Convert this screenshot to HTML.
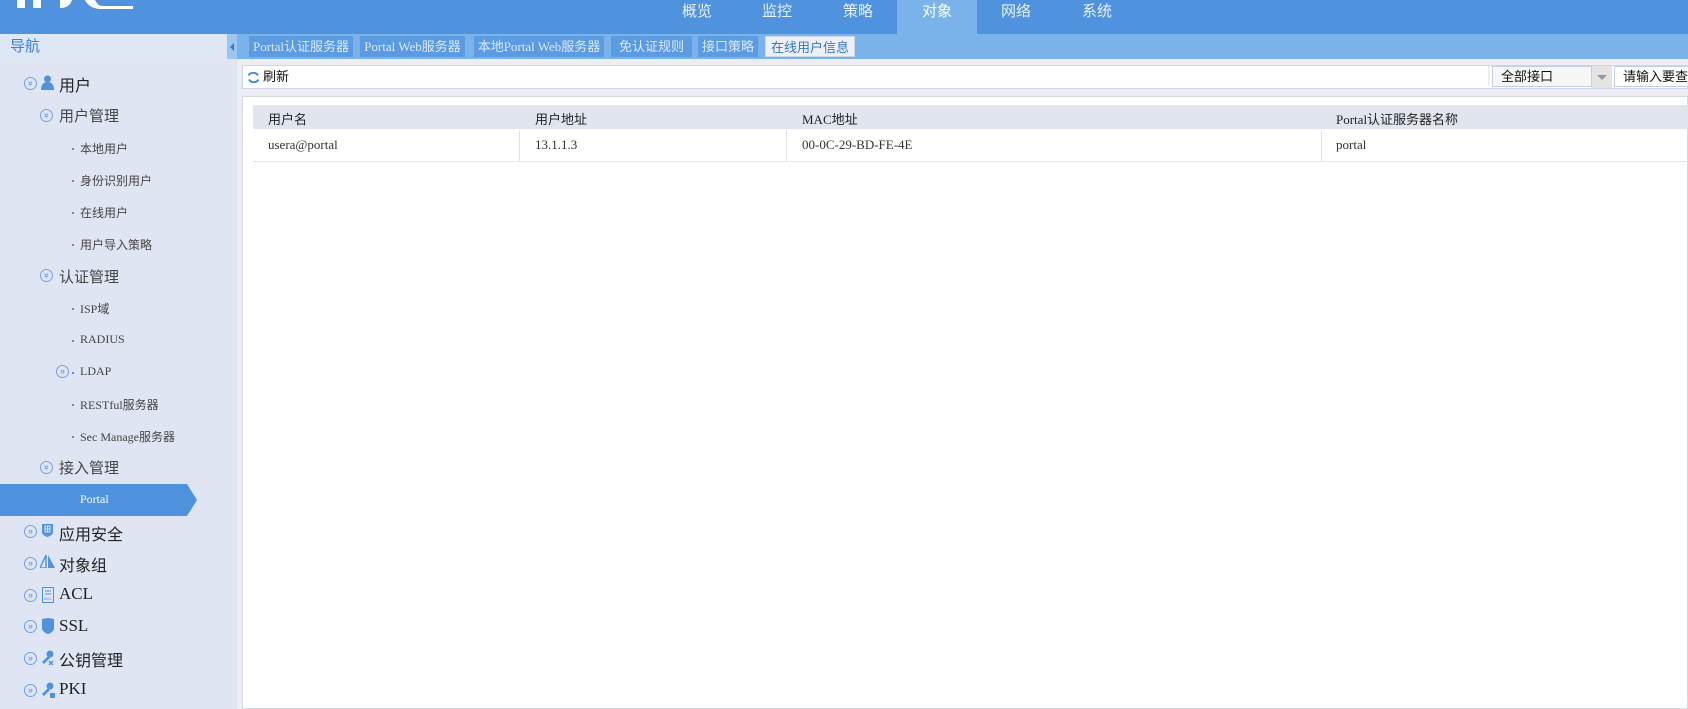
<!DOCTYPE html>
<html><head><meta charset="utf-8"><style>
*{margin:0;padding:0;box-sizing:border-box}
body{width:1688px;height:709px;overflow:hidden;background:#fff;font-family:"Liberation Serif","Noto Sans CJK SC",serif;position:relative}
.a{position:absolute}
.hd{left:0;top:0;width:1688px;height:34px;background:#4f93df}
.nav{top:0;height:34px;width:80px;color:#e8f1fb;font:15px "Liberation Sans","Noto Sans CJK SC",sans-serif;text-align:center;line-height:24px}
.sb{left:0;top:34px;width:237px;height:675px;background:#dfe5f2}
.it{white-space:nowrap;color:#333;font-family:"Liberation Serif","Noto Sans CJK SC",serif}
.l1{font-size:16px;left:59px;color:#222}
.l2{font-size:15px;left:59px;color:#444;font-family:"Liberation Sans","Noto Sans CJK SC",sans-serif}
.l3{font-size:12px;left:80px;color:#444}
.dot{width:2px;height:2px;background:#4f93df;left:72px}
.cir{width:13px;height:13px;border:1.5px solid #6fa3e3;border-radius:50%;color:#6fa3e3;font:bold 9px/10px sans-serif;text-align:center}
.dn{transform:rotate(90deg)}
.tab{top:36px;height:21px;background:#5b9be2;color:#dce9f8;font-size:13px;line-height:21px;text-align:center;white-space:nowrap}
</style></head><body>
<div class="a hd"></div>
<svg class="a" style="left:0;top:0" width="160" height="10"><g fill="#fff"><rect x="17" y="0" width="8" height="8"/><rect x="33" y="0" width="8" height="8"/><path d="M60 0h12c-2 6-6 8-12 8z"/><path d="M85 0h10c2 4 4 6 8 6h30v3h-32c-8 0-14-4-16-9z"/></g></svg>
<div class="a" style="left:897px;top:0;width:80px;height:34px;background:#7ab3ea"></div>
<div class="a nav" style="left:657px">概览</div>
<div class="a nav" style="left:737px">监控</div>
<div class="a nav" style="left:818px">策略</div>
<div class="a nav" style="left:897px;color:#fff">对象</div>
<div class="a nav" style="left:976px">网络</div>
<div class="a nav" style="left:1057px">系统</div>

<div class="a sb"></div>
<div class="a" style="left:0;top:34px;width:237px;height:25px;background:#dde7f6;color:#3b82d6;font:15px 'Liberation Sans','Noto Sans CJK SC',sans-serif;line-height:25px;padding-left:10px">导航</div>
<div class="a" style="left:227px;top:34px;width:10px;height:25px;background:#9cc6ef"></div>
<div class="a" style="left:230px;top:43px;width:0;height:0;border-top:4px solid transparent;border-bottom:4px solid transparent;border-right:4px solid #2f78d0"></div>
<div class="a" style="left:237px;top:34px;width:1451px;height:25px;background:#7ab3ea"></div>
<div class="a" style="left:237px;top:59px;width:1451px;height:650px;background:#eceef4"></div>

<div class="a tab" style="left:249px;width:104px">Portal认证服务器</div>
<div class="a tab" style="left:360px;width:105px">Portal Web服务器</div>
<div class="a tab" style="left:474px;width:130px">本地Portal Web服务器</div>
<div class="a tab" style="left:611px;width:81px">免认证规则</div>
<div class="a tab" style="left:698px;width:60px">接口策略</div>
<div class="a tab" style="left:765px;width:90px;background:#eef0f6;color:#2f78d0;border:1px solid #c9d6ea">在线用户信息</div>

<div class="a" style="left:242px;top:65px;width:1446px;height:24px;background:#fff;border:1px solid #cfd5e6"></div>
<svg class="a" style="left:247px;top:71px" width="13" height="13"><path d="M11 4.5A5.5 5.5 0 0 0 1.5 4.5M2 8.5A5.5 5.5 0 0 0 11.5 8.5" fill="none" stroke="#3b86dc" stroke-width="1.8"/></svg>
<div class="a it" style="left:263px;top:67px;font:13px 'Liberation Sans','Noto Sans CJK SC',sans-serif;line-height:20px;color:#111">刷新</div>
<div class="a" style="left:1488px;top:66px;width:2px;height:20px;background:#eee"></div>
<div class="a" style="left:1492px;top:66px;width:100px;height:21px;border:1px solid #c3cde3;background:#f7f7f7;font:13px 'Liberation Sans','Noto Sans CJK SC',sans-serif;line-height:19px;padding-left:8px;color:#111">全部接口</div>
<div class="a" style="left:1592px;top:66px;width:20px;height:22px;background:#e4e4e4"></div>
<div class="a" style="left:1597px;top:75px;border-left:5px solid transparent;border-right:5px solid transparent;border-top:5px solid #999"></div>
<div class="a" style="left:1614px;top:66px;width:80px;height:21px;border:1px solid #c3cde3;background:#fff;font:13px 'Liberation Sans','Noto Sans CJK SC',sans-serif;line-height:19px;padding-left:8px;color:#111;white-space:nowrap">请输入要查询</div>

<div class="a" style="left:242px;top:96px;width:1446px;height:613px;background:#fff;border:1px solid #d5d9e6"></div>
<div class="a" style="left:253px;top:105px;width:1435px;height:24px;background:#e1e6ee"></div>
<div class="a" style="left:253px;top:161px;width:1435px;height:1px;background:#e6e6e6"></div>
<div class="a" style="left:519px;top:130px;width:1px;height:31px;background:#e2e2e2"></div>
<div class="a" style="left:786px;top:130px;width:1px;height:31px;background:#e2e2e2"></div>
<div class="a" style="left:1321px;top:130px;width:1px;height:31px;background:#e2e2e2"></div>
<div class="a it" style="left:268px;top:109px;font-size:13px;color:#222">用户名</div>
<div class="a it" style="left:535px;top:109px;font-size:13px;color:#222">用户地址</div>
<div class="a it" style="left:802px;top:109px;font-size:13px;color:#222">MAC地址</div>
<div class="a it" style="left:1336px;top:109px;font-size:13px;color:#222">Portal认证服务器名称</div>
<div class="a it" style="left:268px;top:137px;font-size:13px">usera@portal</div>
<div class="a it" style="left:535px;top:137px;font-size:13px">13.1.1.3</div>
<div class="a it" style="left:802px;top:137px;font-size:13px">00-0C-29-BD-FE-4E</div>
<div class="a it" style="left:1336px;top:137px;font-size:13px">portal</div>

<div class="a" style="left:0;top:484px;width:187px;height:32px;background:#4f93df"></div>
<div class="a" style="left:187px;top:484px;width:0;height:0;border-top:16px solid transparent;border-bottom:16px solid transparent;border-left:10px solid #4f93df"></div>

<div class="a cir dn" style="left:24px;top:77px">»</div>
<svg class="a" style="left:41px;top:75px" width="13" height="15"><circle cx="6.5" cy="4" r="3.5" fill="#4f93df"/><path d="M0 15c0-6 3-8 6.5-8s6.5 2 6.5 8z" fill="#4f93df"/></svg>
<div class="a it l1" style="top:72px">用户</div>
<div class="a cir dn" style="left:40px;top:109px">»</div>
<div class="a it l2" style="top:105px">用户管理</div>
<div class="a dot" style="top:148px"></div><div class="a it l3" style="top:140px">本地用户</div>
<div class="a dot" style="top:180px"></div><div class="a it l3" style="top:172px">身份识别用户</div>
<div class="a dot" style="top:212px"></div><div class="a it l3" style="top:204px">在线用户</div>
<div class="a dot" style="top:244px"></div><div class="a it l3" style="top:236px">用户导入策略</div>
<div class="a cir dn" style="left:40px;top:269px">»</div>
<div class="a it l2" style="top:266px">认证管理</div>
<div class="a dot" style="top:308px"></div><div class="a it l3" style="top:300px">ISP域</div>
<div class="a dot" style="top:340px"></div><div class="a it l3" style="top:332px">RADIUS</div>
<div class="a cir" style="left:56px;top:365px">»</div>
<div class="a dot" style="top:372px"></div><div class="a it l3" style="top:364px">LDAP</div>
<div class="a dot" style="top:404px"></div><div class="a it l3" style="top:396px">RESTful服务器</div>
<div class="a dot" style="top:436px"></div><div class="a it l3" style="top:428px">Sec Manage服务器</div>
<div class="a cir dn" style="left:40px;top:461px">»</div>
<div class="a it l2" style="top:457px">接入管理</div>
<div class="a dot" style="top:500px"></div><div class="a it l3" style="top:492px;color:#fff">Portal</div>

<div class="a cir" style="left:24px;top:525px">»</div>
<svg class="a" style="left:42px;top:523px" width="11" height="14"><path d="M0 1h11v8c0 3-3 4-5.5 5C3 13 0 12 0 9z" fill="#4f93df"/><rect x="3" y="3" width="5" height="6" fill="none" stroke="#dfe5f2"/><path d="M5.5 3v6M3 6h5" stroke="#dfe5f2"/></svg>
<div class="a it l1" style="top:521px">应用安全</div>
<div class="a cir" style="left:24px;top:557px">»</div>
<svg class="a" style="left:40px;top:555px" width="16" height="13"><path d="M6 0v13H0z" fill="none" stroke="#4f93df" stroke-width="1.4"/><path d="M8 0l7 13H8z" fill="#4f93df"/></svg>
<div class="a it l1" style="top:552px">对象组</div>
<div class="a cir" style="left:24px;top:589px">»</div>
<svg class="a" style="left:42px;top:587px" width="12" height="16"><rect x=".5" y=".5" width="11" height="15" fill="#dfe5f2" stroke="#4f93df"/><path d="M3 4h6M3 7h6" stroke="#4f93df"/><text x="2" y="13" font-size="4" fill="#4f93df" font-family="Liberation Sans">ACL</text></svg>
<div class="a it l1" style="top:584px;font-size:17px">ACL</div>
<div class="a cir" style="left:24px;top:620px">»</div>
<svg class="a" style="left:42px;top:618px" width="12" height="16"><path d="M0 1l6-1 6 1v9c0 3-3 5-6 6-3-1-6-3-6-6z" fill="#4f93df"/></svg>
<div class="a it l1" style="top:616px;font-size:17px">SSL</div>
<div class="a cir" style="left:24px;top:652px">»</div>
<svg class="a" style="left:41px;top:650px" width="14" height="16"><circle cx="9" cy="4" r="3.5" fill="#4f93df"/><path d="M7 6L1 12l2 2 6-6" fill="#4f93df"/><path d="M8 11l4 4M12 11l-4 4" stroke="#4f93df" stroke-width="1.5"/></svg>
<div class="a it l1" style="top:647px">公钥管理</div>
<div class="a cir" style="left:24px;top:684px">»</div>
<svg class="a" style="left:41px;top:682px" width="14" height="16"><circle cx="9" cy="4" r="3.5" fill="#4f93df"/><path d="M7 6L1 12l2 2 6-6" fill="#4f93df"/><rect x="9" y="11" width="5" height="5" fill="#4f93df"/></svg>
<div class="a it l1" style="top:679px;font-size:17px">PKI</div>
</body></html>
